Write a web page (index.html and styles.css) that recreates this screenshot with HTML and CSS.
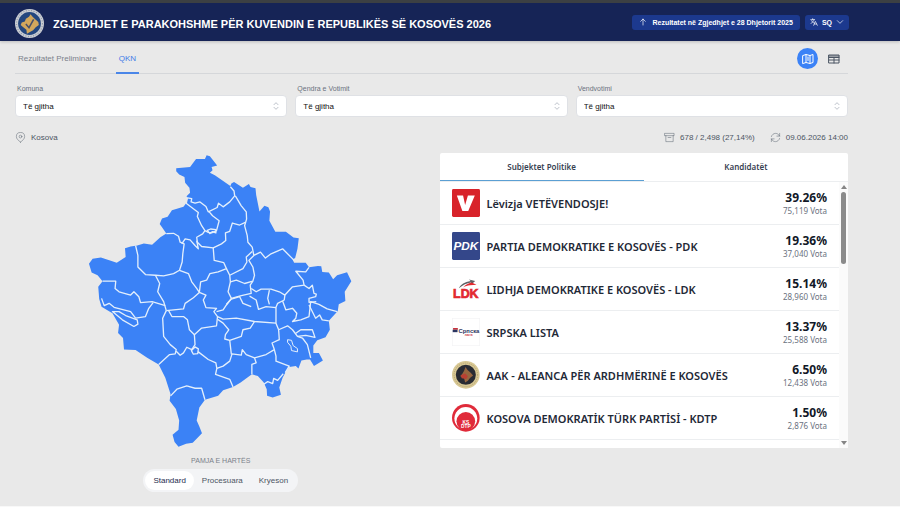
FILE: index.html
```html
<!DOCTYPE html>
<html lang="sq">
<head>
    <meta charset="UTF-8" />
    <meta name="viewport" content="width=device-width, initial-scale=1.0"/>
    <title>Zgjedhjet e parakohshme 2026</title>
    <link rel="stylesheet" href="styles.css">
</head>
<body>

<header class="topbar">
    <svg class="seal" viewBox="0 0 56 56" aria-hidden="true">
        <circle cx="28" cy="28" r="28" fill="#c9ccd2"/>
        <circle cx="28" cy="28" r="25" fill="none" stroke="#8d97a8" stroke-width="2" stroke-dasharray="2 3"/>
        <circle cx="28" cy="28" r="22" fill="#24477f"/>
        <path d="M30 10l4 5 5 5 6 5 1 6-6 4-5 6-7 4-5 3-1-8-6-5-5-4 2-5 6-2 2-5 6-4z" fill="#d2a75c"/>
        <path d="M21 29l6 7 9-16" fill="none" stroke="#47506a" stroke-width="3"/>
    </svg>
    <h1>ZGJEDHJET E PARAKOHSHME PËR KUVENDIN E REPUBLIKËS SË KOSOVËS 2026</h1>
    <nav class="top-actions">
        <a class="pill" href="#2025">
            <svg class="icon" viewBox="0 0 24 24"><path d="M12 21V3M5 10l7-7 7 7"/></svg>
            Rezultatet në Zgjedhjet e 28 Dhjetorit 2025
        </a>
        <button class="pill lang" type="button">
            <svg class="icon" viewBox="0 0 24 24"><path d="M2 5h12M8 2v3M12 5c-1 5-4 9-9 11M5 8c1 3 4 6 8 7M11 22l5-12 6 12M13 18h7"/></svg>
            SQ
            <svg class="icon" viewBox="0 0 24 24"><path d="M4 8l8 8 8-8"/></svg>
        </button>
    </nav>
</header>

<main>
    <div class="tabs-row">
        <nav class="tabs">
            <a href="#preliminare">Rezultatet Preliminare</a>
            <a class="active" href="#qkn">QKN</a>
        </nav>
        <div class="views">
            <button class="active" type="button" aria-label="Harta">
                <svg class="icon" viewBox="0 0 24 24"><path d="M2 5l6-2 8 2 6-2v16l-6 2-8-2-6 2zM8 3v16M16 5v16M12 8v7"/></svg>
            </button>
            <button type="button" aria-label="Tabela">
                <svg class="icon" viewBox="0 0 24 24"><path d="M2 4h20v16H2zM2 9h20M2 14h20M12 9v11M2 6h20"/></svg>
            </button>
        </div>
    </div>

    <form class="filters">
        <div>
            <label for="komuna">Komuna</label>
            <div class="field">
                <select id="komuna"><option>Të gjitha</option></select>
                <svg class="icon" viewBox="0 0 24 24"><path d="M6 8l6-6 6 6M6 16l6 6 6-6"/></svg>
            </div>
        </div>
        <div>
            <label for="qendra">Qendra e Votimit</label>
            <div class="field">
                <select id="qendra"><option>Të gjitha</option></select>
                <svg class="icon" viewBox="0 0 24 24"><path d="M6 8l6-6 6 6M6 16l6 6 6-6"/></svg>
            </div>
        </div>
        <div>
            <label for="vendvotimi">Vendvotimi</label>
            <div class="field">
                <select id="vendvotimi"><option>Të gjitha</option></select>
                <svg class="icon" viewBox="0 0 24 24"><path d="M6 8l6-6 6 6M6 16l6 6 6-6"/></svg>
            </div>
        </div>
    </form>

    <div class="status">
        <span class="place">
            <svg class="icon" viewBox="0 0 24 24"><path d="M12 22c-5-4-9-7-9-12a9 9 0 0 1 18 0c0 5-4 8-9 12z"/><circle cx="12" cy="10" r="3"/></svg>
            Kosova
        </span>
        <span>
            <svg class="icon" viewBox="0 0 24 24"><path d="M2 3h20v5H2zM4 8v13h16V8M9 12h6"/></svg>
            678 / 2,498 (27,14%)
        </span>
        <span>
            <svg class="icon" viewBox="0 0 24 24"><path d="M21 3v6h-6M21 9C19 5 16 3 12 3 8 3 4 6 3 10M3 21v-6h6M3 15c2 4 5 6 9 6 4 0 8-3 9-7"/></svg>
            09.06.2026 14:00
        </span>
    </div>

    <div class="content">
        <section class="map-side">
            <svg class="map" viewBox="18 20 810 895" role="img" aria-label="Harta e Kosovës">
                <path class="land" d="M288 66L330 62L348 38L375 38L380 27L390 30L412 58L395 62L398 72L390 80L405 87L452 120L455 112L463 108L490 125L508 114L513 123L528 127L530 147L540 197L555 180L567 184L572 197L570 225L588 258L620 258L643 276L659 278L655 310L648 338L640 342L645 352L680 352L690 366L717 362L727 363L730 380L750 382L763 402L775 390L805 381L818 408L798 440L800 468L780 478L777 498L750 528L753 555L740 578L715 587L703 603L703 625L720 625L732 648L705 665L693 645L683 645L667 648L658 672L650 665L630 668L618 685L610 700L600 730L605 752L580 760L563 755L562 735L553 715L535 695L517 690L483 715L460 728L430 738L415 755L375 767L358 790L350 830L358 848L366 868L338 897L318 900L295 909L283 895L277 873L295 858L297 830L287 795L268 770L271 750L255 700L235 660L200 640L165 616L130 615L127 580L112 565L115 540L95 505L62 485L55 462L52 425L65 408L50 390L32 382L24 355L35 340L60 336L90 346L108 352L135 335L133 308L150 303L170 300L190 294L215 298L240 275L258 264L245 245L238 235L245 218L262 213L275 193L310 183L318 172L320 150L330 140L328 125L315 110L313 93L297 85L288 75Z"/>
                <path class="gap" d="M312 152L324 157L320 174L310 168Z"/>
                <g class="borders">
                    <path d="M318 155L335 158L333 168L345 172L360 168L378 182L385 198L412 185L416 172L430 183L450 168L465 150L463 135L452 122"/>
                    <path d="M318 172L355 200L352 212L365 240L375 255L385 260L395 262L410 255L418 225L398 210L388 198"/>
                    <path d="M382 254L392 250L408 252L408 262L397 258L390 264Z"/>
                    <path d="M375 255L368 265L350 275L352 290L365 303L400 307L425 295L438 285L437 262L450 257L458 232L480 238L497 230"/>
                    <path d="M467 150L485 180L500 198L501 220L495 240L503 270L505 290L518 305L523 330L543 320L558 338L575 325L610 310L645 345"/>
                    <path d="M258 264L280 263L295 272L300 290L312 295L308 325L306 350L298 375L280 385L250 392L225 390L195 388L172 365L172 330L165 300"/>
                    <path d="M305 295L315 280L330 283L345 300L355 310L350 285"/>
                    <path d="M298 375L325 385L335 410L350 430L358 442L362 410L380 405L390 385L415 380L440 370L432 352L403 345L400 307"/>
                    <path d="M440 370L450 390L490 370L502 350L500 335L518 318"/>
                    <path d="M523 330L508 345L520 365L525 390L520 408L495 415L470 405L452 410L450 390"/>
                    <path d="M452 410L445 440L455 460L440 480L430 495L410 500M455 460L485 452L515 445L512 420L520 408"/>
                    <path d="M515 430L530 440L545 432L575 432L600 440L617 450L640 425L675 420L672 405L650 378L680 380L690 366"/>
                    <path d="M675 420L690 430L700 420L705 445L712 447L710 455L690 460L690 472L712 470"/>
                    <path d="M617 450L615 465L595 475L590 487L590 515L590 535L598 555"/>
                    <path d="M610 468L620 495L640 490L653 505L650 520L640 530L665 525L690 515L695 470L720 478L745 492L775 500"/>
                    <path d="M690 480L710 520L722 510L730 525L750 528"/>
                    <path d="M65 408L105 408L103 430L115 440L150 450L160 440L175 455L180 473L215 470L255 482"/>
                    <path d="M225 390L238 415L232 440L250 470L258 497"/>
                    <path d="M62 460L70 482L85 475L100 487L150 500L165 520L195 515L205 490L218 473"/>
                    <path d="M95 500L115 500L135 512L170 525L172 538L160 545L125 525Z"/>
                    <path d="M258 497L247 520L250 575L270 600L288 615L285 628L268 630L235 660"/>
                    <path d="M258 497L310 492L315 475L340 458L358 442"/>
                    <path d="M265 497L275 515L310 515L322 525L328 555L343 570L365 550L410 543L413 515L402 500L410 490L378 488L370 465L378 450L358 442"/>
                    <path d="M343 570L345 600L335 615L320 608L310 625L300 632L288 620"/>
                    <path d="M345 607L355 613L353 627L340 629L334 618ZM355 622L385 645L408 655L411 672L407 690L450 705L460 728"/>
                    <path d="M411 672L430 665L450 650L457 628L485 632L488 615L500 630L525 640L530 655L517 660L517 690"/>
                    <path d="M413 515L430 523L470 520L525 530L590 535"/>
                    <path d="M525 530L512 550L490 555L485 575L450 587L435 583L437 570L447 555L430 535L413 523M450 587L455 630"/>
                    <path d="M525 640L560 630L585 615L578 595L600 585L598 555L625 543L640 555L655 575L670 580L685 600L695 640"/>
                    <path d="M585 615L590 635L590 650L630 665L618 685"/>
                    <path d="M648 567L665 555L700 555L708 578L680 572L655 575"/>
                    <path class="thin" d="M625 585L637 587L642 603L655 612L655 622L637 618L635 605L625 593Z"/>
                    <path d="M553 720L565 712L580 718L583 702L595 708L612 688"/>
                    <path d="M510 453L530 465L537 493L560 485L590 488M570 435L565 460L570 478"/>
                    <path d="M440 478L455 462L480 455L490 475L515 485"/>
                    <path d="M271 755L290 735L320 725L345 732L365 732L375 767"/>
                </g>
            </svg>
            <p class="map-label">PAMJA E HARTËS</p>
            <div class="map-modes">
                <button class="active" type="button">Standard</button>
                <button type="button">Procesuara</button>
                <button type="button">Kryeson</button>
            </div>
        </section>

        <section class="panel">
            <div class="panel-tabs">
                <button class="active" type="button">Subjektet Politike</button>
                <button type="button">Kandidatët</button>
            </div>
            <div class="panel-body">
                <ul class="parties">
                    <li>
                        <svg class="logo" viewBox="0 0 81 81" aria-hidden="true">
                            <rect width="81" height="81" rx="4" fill="#d8232a"/>
                            <path d="M14 19h18l6 27 8-27h20L47 64H30z" fill="#fff"/>
                        </svg>
                        <span class="name">Lëvizja VETËVENDOSJE!</span>
                        <span class="score"><b>39.26%</b><small>75,119 Vota</small></span>
                    </li>
                    <li>
                        <svg class="logo" viewBox="0 0 81 81" aria-hidden="true">
                            <rect width="81" height="81" rx="4" fill="#34478a"/>
                            <text class="logo-pdk" x="40" y="52" text-anchor="middle">PDK</text>
                        </svg>
                        <span class="name">PARTIA DEMOKRATIKE E KOSOVËS - PDK</span>
                        <span class="score"><b>19.36%</b><small>37,040 Vota</small></span>
                    </li>
                    <li>
                        <svg class="logo" viewBox="0 0 81 81" aria-hidden="true">
                            <path d="M20 38c6-12 16-18 34-21l-5-4 18 4-12 11v-6c-13 2-22 7-35 16z" fill="#5e6266"/>
                            <path d="M32 36c8-8 14-12 25-14l14 6-19 2c-8 0-13 3-20 6z" fill="#e22a31"/>
                            <text class="logo-ldk" x="40" y="66" text-anchor="middle">LDK</text>
                        </svg>
                        <span class="name">LIDHJA DEMOKRATIKE E KOSOVËS - LDK</span>
                        <span class="score"><b>15.14%</b><small>28,960 Vota</small></span>
                    </li>
                    <li>
                        <svg class="logo" viewBox="0 0 81 81" aria-hidden="true">
                            <rect x="1" y="1" width="79" height="79" fill="#fff" stroke="#f3f3f5" stroke-width="2"/>
                            <path d="M3 29h14v5H3z" fill="#c8323c"/>
                            <path d="M2 34h14v7H2z" fill="#2b3560"/>
                            <text class="logo-srp" x="49" y="43" text-anchor="middle">Српска</text>
                            <text class="logo-lista" x="48" y="52" text-anchor="middle">листа</text>
                        </svg>
                        <span class="name">SRPSKA LISTA</span>
                        <span class="score"><b>13.37%</b><small>25,588 Vota</small></span>
                    </li>
                    <li>
                        <svg class="logo" viewBox="0 0 81 81" aria-hidden="true">
                            <circle cx="40" cy="40" r="40" fill="#d8c894"/>
                            <circle cx="40" cy="40" r="34" fill="none" stroke="#b9a878" stroke-width="3" stroke-dasharray="3 3"/>
                            <circle cx="40" cy="40" r="29" fill="#292b33"/>
                            <path d="M39 17l6 9 9 8 7 8-9 7-6 8-8 5-3-12-11-6 6-7 5-9z" fill="#96663f"/>
                            <path d="M25 41l13-5 8 8-5 8-13-2z" fill="#b94033"/>
                        </svg>
                        <span class="name">AAK - ALEANCA PËR ARDHMËRINË E KOSOVËS</span>
                        <span class="score"><b>6.50%</b><small>12,438 Vota</small></span>
                    </li>
                    <li>
                        <svg class="logo" viewBox="0 0 81 81" aria-hidden="true">
                            <circle cx="40" cy="40" r="40" fill="#e02b3a"/>
                            <circle cx="40" cy="42" r="33" fill="#fff"/>
                            <circle cx="40" cy="50" r="27" fill="#e02b3a"/>
                            <text class="logo-kdtp" x="40" y="57" text-anchor="middle">KS</text>
                            <text class="logo-kdtp" x="40" y="70" text-anchor="middle">DTP</text>
                        </svg>
                        <span class="name">KOSOVA DEMOKRATİK TÜRK PARTİSİ - KDTP</span>
                        <span class="score"><b>1.50%</b><small>2,876 Vota</small></span>
                    </li>
                </ul>
                <div class="scrollbar">
                    <svg viewBox="0 0 6 4"><path d="M0 4l3-4 3 4z"/></svg>
                    <div class="thumb"></div>
                    <svg viewBox="0 0 6 4"><path d="M0 0l3 4 3-4z"/></svg>
                </div>
            </div>
        </section>
    </div>
</main>

</body>
</html>
```
FILE: styles.css
```css
* {
    box-sizing: border-box;
}
body {
    margin: 0;
    min-height: 100vh;
    background: #e9e9e9;
    border-bottom: 1px solid #f8f8f8;
    font-family: "Liberation Sans", Arial, sans-serif;
    font-size: 8px;
    color: #1f2937;
}
button, select {
    font: inherit;
    color: inherit;
    border: 0;
    background: none;
    padding: 0;
}
a {
    color: inherit;
    text-decoration: none;
}
.icon {
    width: 10px;
    height: 10px;
    flex: none;
    fill: none;
    stroke: currentColor;
    stroke-width: 2;
    stroke-linecap: round;
    stroke-linejoin: round;
}

/* header */
.topbar {
    display: flex;
    align-items: center;
    height: 41px;
    padding: 3px 51px 0 15px;
    border-top: 3px solid #3c4043;
    background: #162456;
    color: #fff;
    box-shadow: 0 1px 3px rgba(0, 0, 0, 0.2);
}
.seal {
    width: 29px;
    height: 29px;
    margin-right: 9px;
}
.topbar h1 {
    margin: 0;
    font-size: 11px;
}
.top-actions {
    display: flex;
    gap: 5px;
    margin-left: auto;
    margin-top: -3px;
}
.pill {
    display: flex;
    align-items: center;
    gap: 5px;
    height: 15px;
    padding: 0 7px;
    border-radius: 3px;
    background: #1c398e;
    font-size: 7px;
    font-weight: bold;
    white-space: nowrap;
}
.pill .icon {
    width: 8px;
    height: 8px;
}
.lang {
    gap: 4px;
    padding: 0 5px;
}

/* tabs */
main {
    padding: 7px 52px 0 15px;
}
.tabs-row {
    display: flex;
    justify-content: space-between;
    height: 26px;
    border-bottom: 1px solid #d5d7da;
}
.tabs {
    display: flex;
    gap: 16px;
}
.tabs a {
    height: 26px;
    padding: 0 3px;
    line-height: 22px;
    color: #7b818b;
}
.tabs .active {
    color: #3f7be8;
    border-bottom: 2px solid #4a86e8;
}
.views {
    display: flex;
    gap: 5px;
    padding-right: 4px;
}
.views button {
    display: grid;
    place-items: center;
    width: 21px;
    height: 21px;
    border-radius: 50%;
    color: #4b5563;
}
.views .active {
    background: #3b82f6;
    color: #fff;
}
.views .icon {
    width: 12px;
    height: 12px;
}

/* filters */
.filters {
    display: grid;
    grid-template-columns: repeat(3, 1fr);
    gap: 8px;
    margin-top: 9px;
}
.filters label {
    display: block;
    padding-left: 2px;
    font-size: 7px;
    line-height: 11px;
    color: #6b7280;
}
.field {
    display: flex;
    align-items: center;
    margin-top: 1px;
    border: 1px solid #dfe1e5;
    border-radius: 4px;
    background: #fff;
    color: #9ca3af;
}
.field select {
    flex: 1;
    appearance: none;
    height: 20px;
    padding-left: 7px;
    color: #111;
}
.field .icon {
    width: 8px;
    height: 10px;
    margin-right: 6px;
}

.status {
    display: flex;
    gap: 15px;
    margin: 15px 0 10px;
    line-height: 11px;
    color: #4b5563;
}
.status span {
    display: flex;
    align-items: center;
    gap: 5px;
}
.status .place {
    margin-right: auto;
}
.status .icon {
    width: 11px;
    height: 11px;
    stroke-width: 1;
}

.content {
    display: grid;
    grid-template-columns: 1fr 1fr;
    align-items: start;
    gap: 16px;
}

/* map */
.map-side {
    display: flex;
    flex-direction: column;
    align-items: center;
    padding-left: 3px;
}
.map {
    width: 66%;
}
.land {
    fill: #3b82f6;
}
.gap {
    fill: #e9e9e9;
}
.borders {
    fill: none;
    stroke: #e3effc;
    stroke-width: 4;
    stroke-linejoin: round;
}
.borders .thin {
    stroke-width: 3;
}
.map-label {
    margin: 8px 0 4px;
    font-size: 7px;
    line-height: 8px;
    color: #7b818b;
}
.map-modes {
    display: flex;
    padding: 2px;
    border-radius: 12px;
    background: #f3f4f6;
}
.map-modes button {
    height: 19px;
    padding: 0 8px;
    border-radius: 10px;
    color: #4b5563;
}
.map-modes .active {
    background: #fff;
    color: #1e2b4d;
}

/* results */
.panel {
    background: #fff;
    border-radius: 2px;
    font-family: "Noto Sans", "Open Sans", sans-serif;
}
.panel-tabs {
    display: flex;
    border-bottom: 1px solid #eceef0;
}
.panel-tabs button {
    flex: 1;
    height: 28px;
    border-bottom: 1px solid transparent;
    font-weight: 600;
    color: #374151;
}
.panel-tabs .active {
    border-bottom-color: #5b9fd3;
}
.panel-body {
    display: flex;
}
.parties {
    flex: 1;
    margin: 0;
    padding: 0 0 8px;
    list-style: none;
}
.parties li {
    display: flex;
    align-items: center;
    height: 43px;
    padding: 0 12px;
    border-bottom: 1px solid #eceef0;
}
.logo {
    width: 28px;
    height: 28px;
    margin-right: 7px;
}
.name {
    flex: 1;
    font-size: 11px;
    font-weight: 600;
}
.score {
    text-align: right;
}
.score b {
    display: block;
    font-size: 12px;
    line-height: 15px;
    font-weight: 700;
    color: #111827;
}
.score small {
    display: block;
    font-size: 8px;
    line-height: 12px;
    color: #6b7280;
}
.logo text {
    font-family: "Liberation Sans", Arial, sans-serif;
    font-weight: bold;
}
.logo .logo-pdk {
    font-size: 34px;
    font-style: italic;
    fill: #fff;
}
.logo .logo-ldk {
    font-size: 36px;
    fill: #e22a31;
    stroke: #e22a31;
    stroke-width: 2;
}
.logo .logo-srp {
    font-size: 17px;
    fill: #2b3560;
}
.logo .logo-lista {
    font-size: 8px;
    fill: #c8323c;
}
.logo .logo-kdtp {
    font-size: 14px;
    fill: #fff;
}
.scrollbar {
    display: flex;
    flex-direction: column;
    align-items: center;
    width: 9px;
    padding: 3px 0;
    background: #fbfbfb;
}
.scrollbar svg {
    width: 6px;
    height: 4px;
    fill: #858585;
}
.scrollbar .thumb {
    width: 5px;
    height: 72px;
    margin: 3px 0 auto;
    border-radius: 3px;
    background: #8b8b8b;
}
```
